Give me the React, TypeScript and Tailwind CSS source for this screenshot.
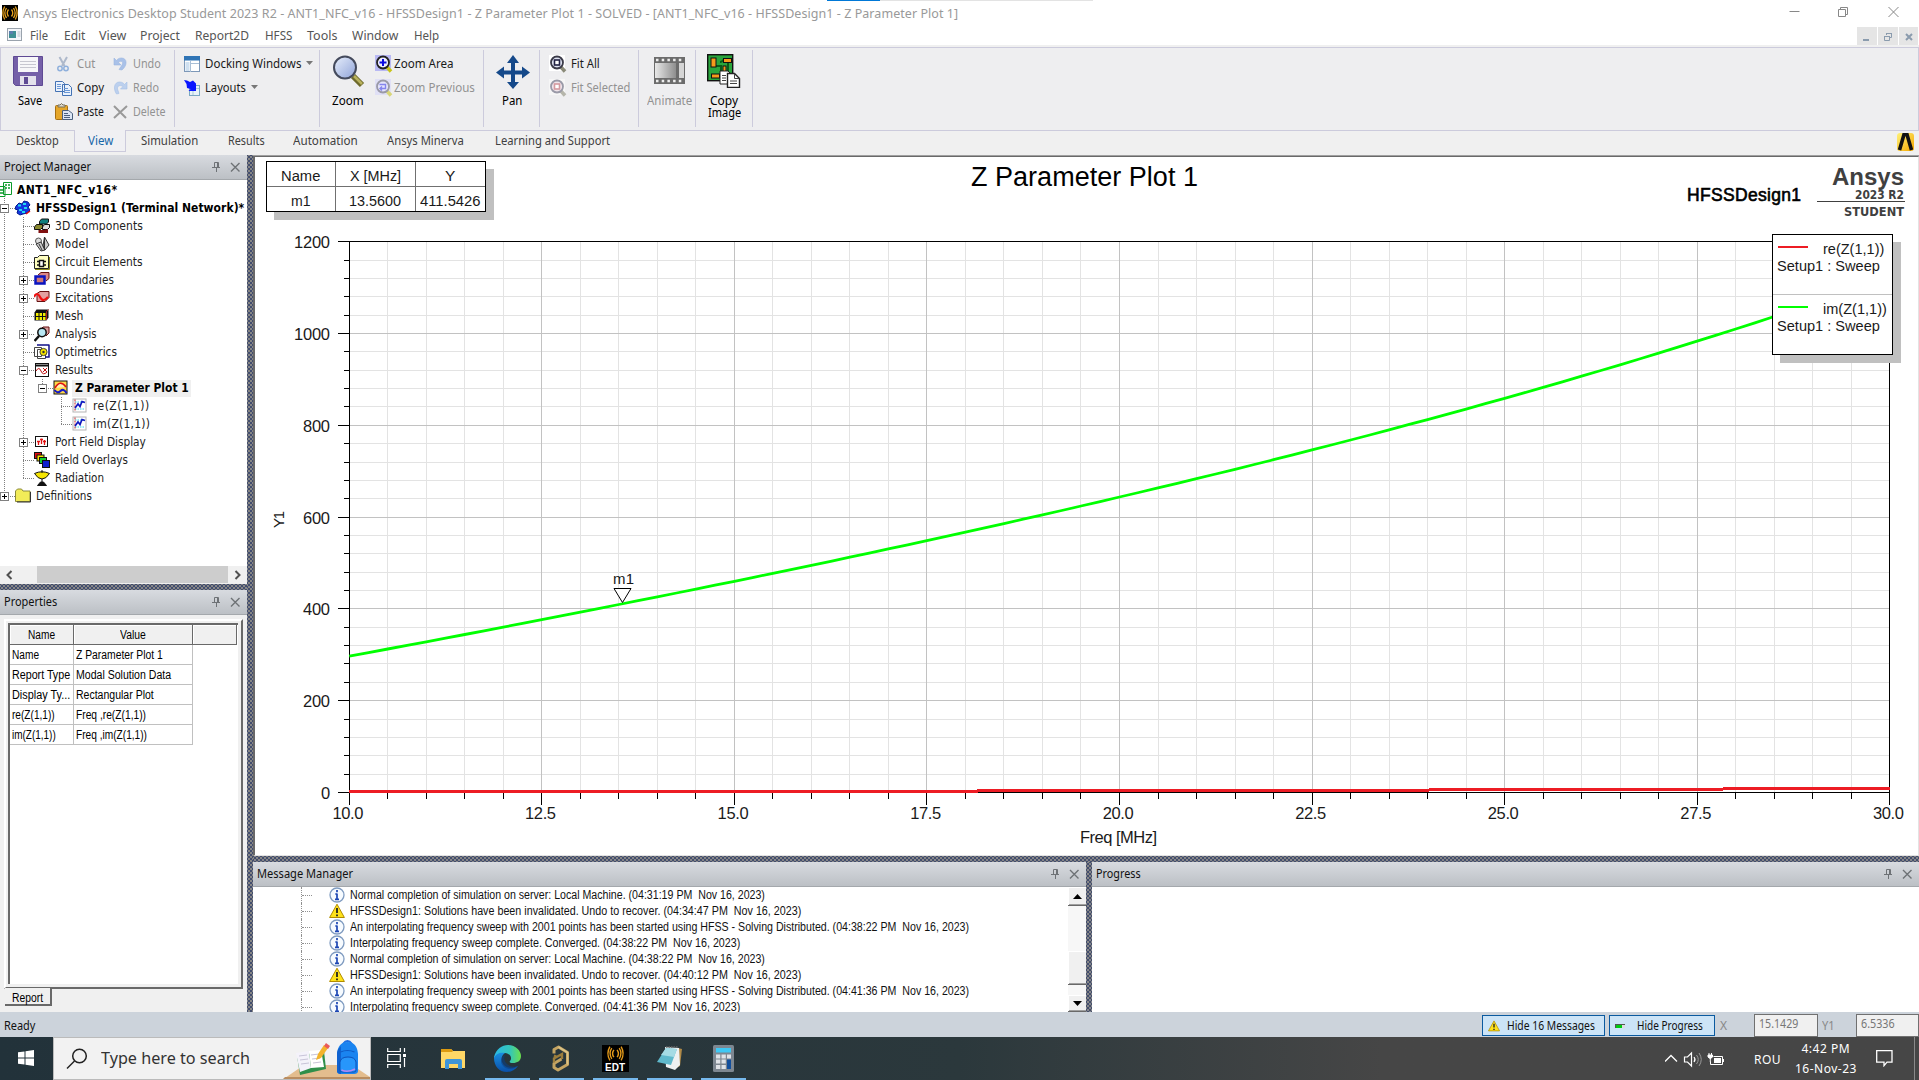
import { useLayoutEffect, useRef, useState, type CSSProperties, type ReactNode } from "react";

const UI = "font-['Noto_Sans','Open_Sans',sans-serif]";
const TREE = "font-['DejaVu_Sans_Condensed','DejaVu_Sans',sans-serif]";
const ARIAL = "font-['Liberation_Sans',Arial,sans-serif]";

/* One line of text fitted to w pixels: wide text is condensed, narrow text is tracked out. */
function Fit({ w, children, className = "" }: { w: number; children: string; className?: string }) {
  const ref = useRef<HTMLSpanElement>(null);
  const [fit, setFit] = useState<CSSProperties>({});
  useLayoutEffect(() => {
    const natural = ref.current!.offsetWidth;
    setFit(natural > w ? { transform: `scaleX(${w / natural})` } : { letterSpacing: (w - natural) / Math.max(1, children.length - 1) });
  }, [w, children]);
  return (
    <span className={"block shrink-0 whitespace-pre " + className} style={{ width: w }}>
      <span ref={ref} className="inline-block origin-left" style={fit}>{children}</span>
    </span>
  );
}

function Svg({ w, h, vb, children, className = "", crisp = false }: { w: number; h: number; vb?: string; children: ReactNode; className?: string; crisp?: boolean }) {
  return (
    <svg width={w} height={h} viewBox={vb ?? `0 0 ${w} ${h}`} fill="none" className={"block shrink-0 " + className} shapeRendering={crisp ? "crispEdges" : "auto"}>
      {children}
    </svg>
  );
}

/* ---------- title and menu ---------- */

const Waves = ({ color }: { color: string }) => (
  <g stroke={color} strokeWidth="1.3">
    <path d="M6.5 4.5Q4 8 6.5 11.5M4.5 3Q1.2 8 4.5 13M2.7 1.5Q-1 8 2.7 14.5M9.5 4.5Q12 8 9.5 11.5M11.5 3Q14.8 8 11.5 13M13.3 1.5Q17 8 13.3 14.5" />
  </g>
);

function TitleBar() {
  return (
    <div className="relative flex h-6 shrink-0 items-center bg-white pl-[2px] pt-[3px] text-[12.5px] leading-none text-[#999]">
      <div className="absolute left-[827px] top-0 flex h-px w-[266px] bg-[#e3e3e3]"><div className="h-px w-[53px] bg-[#0078d7]" /></div>
      <Svg w={16} h={16} className="mb-[2px]"><rect width="16" height="16" fill="#000" /><Waves color="#e6a11c" /></Svg>
      <Fit w={935} className="ml-[5px] pt-px">Ansys Electronics Desktop Student 2023 R2 - ANT1_NFC_v16 - HFSSDesign1 - Z Parameter Plot 1 - SOLVED - [ANT1_NFC_v16 - HFSSDesign1 - Z Parameter Plot 1]</Fit>
      <Svg w={112} h={14} className="ml-auto mr-[19px] mb-[4px]">
        <path d="M1.500 6.500H11.500" stroke="#888" />
        <path d="M50.500 4.500h7v7h-7zM52.500 4.500v-2h7v7h-2" stroke="#888" />
        <path d="M100.500 2l10 10M110.500 2l-10 10" stroke="#888" />
      </Svg>
    </div>
  );
}

const menus: [string, number, number][] = [
  ["File", 18, 8], ["Edit", 21, 16], ["View", 27, 14], ["Project", 40, 14], ["Report2D", 54, 15],
  ["HFSS", 27, 16], ["Tools", 30, 15], ["Window", 46, 15], ["Help", 25, 16],
];

function MenuBar() {
  return (
    <div className="flex h-[21px] shrink-0 items-center bg-white pl-[7px] text-[12.500px] leading-none text-[#555]">
      <Svg w={15} h={13} className="mb-px">
        <rect x=".5" y=".5" width="14" height="12" fill="#f4f6fa" stroke="#9aa3ad" />
        <rect x="2" y="3" width="7" height="7" fill="#3f8f94" /><rect x="2" y="3" width="4" height="3" fill="#5b7fae" /><path d="M10.500 4h3M10.500 6h3M10.500 8h3" stroke="#b5bdc8" />
      </Svg>
      {menus.map(([t, w, g]) => <div key={t} className="flex pt-[4px]"><div className="shrink-0" style={{ width: g }} /><Fit w={w}>{t}</Fit></div>)}
      <div className="ml-auto flex gap-px pt-[3px] pr-px">
        <Svg w={20} h={19}><rect width="20" height="19" fill="#e5e5e5" /><path d="M6 13h6" stroke="#8a9bad" strokeWidth="2" /></Svg>
        <Svg w={20} h={19}><rect width="20" height="19" fill="#e5e5e5" /><path d="M6.500 9.500h5v4h-5zM8.500 8V6.500h5v4H12M8 6.500h6M6 9.500h6" stroke="#8a9bad" /></Svg>
        <Svg w={19} h={19}><rect width="19" height="19" fill="#e5e5e5" /><path d="M7 7l6 6M13 7l-6 6" stroke="#8a9bad" strokeWidth="2" /></Svg>
      </div>
    </div>
  );
}

/* ---------- ribbon ---------- */

const Caret = ({ className = "" }: { className?: string }) => <Svg w={7} h={4} className={className}><path d="M0 0h7L3.500 4z" fill="#777" /></Svg>;

function Group({ w, children }: { w: number; children: ReactNode }) {
  return <div className="flex h-[77px] shrink-0 border-r border-[#cccbdc]" style={{ width: w }}>{children}</div>;
}

function Item({ icon, label, w, off, caret }: { icon: ReactNode; label: string; w: number; off?: boolean; caret?: boolean }) {
  return (
    <div className={"flex h-6 items-center " + (off ? "text-[#929292]" : "text-[#1a1a1a]")}>
      {icon}
      <Fit w={w}>{label}</Fit>
      {caret && <Caret className="ml-[5px] mb-[3px]" />}
    </div>
  );
}

const CutI = <Svg w={22} h={18}><path d="M4.500 2l5 9M12 2L7 11" stroke="#aeb9cb" strokeWidth="2" /><circle cx="5" cy="13.500" r="2.200" stroke="#8fb0dc" strokeWidth="1.500" /><circle cx="11" cy="13.500" r="2.200" stroke="#8fb0dc" strokeWidth="1.500" /></Svg>;
const CopyI = <Svg w={22} h={18}><path d="M.5 2.500h7l2 2v8h-9zM7.500 5.500h6l3 3v8h-9z" fill="#e9f1fc" stroke="#4372b4" /><path d="M2 5.500h4M2 7.500h4M2 9.500h4M9 9.500h4M9 11.500h6M9 13.500h6" stroke="#6b98d6" /></Svg>;
const PasteI = <Svg w={22} h={18}><rect x=".5" y="2.500" width="12" height="14" rx="1" fill="#e5a62a" stroke="#a66f13" /><path d="M3 4h7V2H8L6.500.5 5 2H3z" fill="#ded9cc" stroke="#77705c" /><path d="M7.500 7.500h6l4 3v6h-10z" fill="#dce6f4" stroke="#4b617d" /><path d="M9 10.500h4M9 12.500h6M9 14.500h6" stroke="#4b617d" /></Svg>;
const UndoI = <Svg w={20} h={16}><path d="M1 2v7h7L5.500 6.500C8 4 11 6 9 9l-3 4.500 3 .5C15 9 14 2 8.500 2 6 2 4.500 3 3.500 4.500z" fill="#a9c1e8" stroke="#9ab5e0" strokeWidth=".6" /></Svg>;
const RedoI = <Svg w={20} h={16}><path d="M14 2v7H7.500L10 6.500C7 4.500 4 6 4.500 9l1.500 4.500-2.500.5C0 9 1 2 6.500 2 9 2 10.500 3 11.500 4.500z" fill="#bcd0ee" stroke="#a5c0e6" strokeWidth=".6" /></Svg>;
const DelI = <Svg w={20} h={16}><path d="M1 2l12 12M14 2L1 14" stroke="#999" strokeWidth="2" /></Svg>;
const DockI = <Svg w={21} h={17}><rect x=".5" y="1" width="15" height="14.500" fill="#fff" stroke="#7d98b8" /><rect width="16" height="4.500" fill="#2f74b5" /><rect x="1.500" y="6" width="4" height="9" fill="#cfe0f0" /><path d="M6.500 5v11M7 7.500h8" stroke="#a9bfd6" /></Svg>;
const LayI = <Svg w={21} h={18}><rect x="5.500" y="6.500" width="10" height="10" fill="#e7f2f8" stroke="#7aa7c2" /><path d="M9 11v5M6 9.500h9" stroke="#a9c8da" /><path d="M0 1l3 .5L6 3l3-1.500 3 3V12H4.500l2-2L3 9 2.500 5z" fill="#0a16ff" /></Svg>;

function MagSmall({ ring, fill, handle, plus, back, inner, box }: { ring: string; fill: string; handle: string; plus?: boolean; back?: boolean; inner?: string; box?: string }) {
  return (
    <Svg w={19} h={18}>
      {box && <rect width="16" height="16" fill={box} />}
      <path d="M11 11l5 5.500" stroke={handle} strokeWidth="3.500" />
      <circle cx="8" cy="7.500" r="6" fill={fill} stroke={ring} strokeWidth="1.800" />
      {plus && <path d="M8 4v7M4.500 7.500h7" stroke="#0a0ae0" strokeWidth="2" />}
      {back && <path d="M4.500 5.500h6v4h-5M7 7.500l-2 2 2 2" stroke="#8585ee" strokeWidth="1.400" />}
      {inner && <rect x="5.500" y="5" width="5" height="5" stroke={inner} strokeWidth="1.600" fill="#fff" />}
    </Svg>
  );
}

function Ribbon() {
  return (
    <div className="h-[84px] shrink-0 border border-[#cccbdc] bg-[#eeeef0] pt-[2px] text-[12px] leading-none">
      <div className="flex">
        <Group w={174}>
          <div className="w-[54px] shrink-0 pl-[12px] pt-[6px]">
            <Svg w={30} h={30}>
              <path d="M.5.500h29v29h-27l-2-2z" fill="#7560a8" stroke="#5f4a94" /><rect x="5" y="1" width="20" height="15" fill="#f7f7f9" />
              <path d="M7 5.500h16M7 8.500h16M7 11.500h16" stroke="#c7c7d0" /><rect x="7" y="20" width="16" height="9" fill="#e4e2ec" /><rect x="11" y="21" width="4" height="7" fill="#5f4a94" />
            </Svg>
            <Fit w={24} className="ml-[5px] mt-[9px]">Save</Fit>
          </div>
          <div className="w-[57px] shrink-0 pt-[2px]">
            <Item icon={CutI} label="Cut" w={18} off /><Item icon={CopyI} label="Copy" w={27} /><Item icon={PasteI} label="Paste" w={27} />
          </div>
          <div className="shrink-0 pl-px pt-[2px]">
            <Item icon={UndoI} label="Undo" w={28} off /><Item icon={RedoI} label="Redo" w={26} off /><Item icon={DelI} label="Delete" w={33} off />
          </div>
        </Group>
        <Group w={145}>
          <div className="pl-[9px] pt-[2px]">
            <Item icon={DockI} label="Docking Windows" w={96} caret /><Item icon={LayI} label="Layouts" w={41} caret />
          </div>
        </Group>
        <Group w={164}>
          <div className="w-[55px] shrink-0 pl-[12px] pt-[5px]">
            <Svg w={34} h={34}>
              <defs><linearGradient id="glass" x1="0" y1="0" x2="1" y2="1"><stop stopColor="#e8effc" /><stop offset="1" stopColor="#8fa3d8" /></linearGradient></defs>
              <path d="M21 21l9 9" stroke="#6e6a2c" strokeWidth="6" /><path d="M22 21l8 8" stroke="#b9b25e" strokeWidth="2.500" />
              <circle cx="13" cy="12.500" r="11" fill="url(#glass)" stroke="#444a5c" strokeWidth="2" />
            </Svg>
            <Fit w={32} className="mt-[6px]">Zoom</Fit>
          </div>
          <div className="pt-[2px]">
            <Item icon={<MagSmall ring="#222" fill="#eef" handle="#c9c419" plus box="#b9b9f4" />} label="Zoom Area" w={60} />
            <Item icon={<MagSmall ring="#9a9aa8" fill="#e4e4fb" handle="#d8d678" back box="#e0e0f6" />} label="Zoom Previous" w={81} off />
          </div>
        </Group>
        <Group w={56}>
          <div className="pl-[12px] pt-[5px]">
            <Svg w={34} h={34}><path d="M17 0l6 8h-4v7.500h7v-4l8 6-8 6v-4h-7V27h4l-6 7-6-7h4v-7.500H8v4l-8-6 8-6v4h7V8h-4z" fill="#15498a" /></Svg>
            <Fit w={20} className="ml-[6px] mt-[6px]">Pan</Fit>
          </div>
        </Group>
        <Group w={99}>
          <div className="pl-[9px] pt-[2px]">
            <Item icon={<MagSmall ring="#3a3a48" fill="#dfe3f2" handle="#8a8a78" inner="#222244" box="#fff" />} label=" Fit All" w={32} />
            <Item icon={<MagSmall ring="#9a9aa8" fill="#f0e4ea" handle="#b5b5aa" inner="#d49aa0" box="#f6f6f6" />} label=" Fit Selected" w={62} off />
          </div>
        </Group>
        <Group w={57}>
          <div className="pl-[8px] pt-[7px] text-[#929292]">
            <Svg w={31} h={28} className="ml-[7px]">
              <defs><linearGradient id="film"><stop stopColor="#e8e8e8" /><stop offset="1" stopColor="#8e8e8e" /></linearGradient></defs>
              <rect width="31" height="27" fill="#6c6c6c" /><rect x="1" y="6" width="21" height="15" fill="url(#film)" /><rect x="25" y="6" width="5" height="15" fill="#d5d5d5" />
              <path d="M2 3h28M2 24h28" stroke="#eee" strokeWidth="2.500" strokeDasharray="2.500 3.200" />
            </Svg>
            <Fit w={45} className="mt-[10px]">Animate</Fit>
          </div>
        </Group>
        <Group w={57}>
          <div className="pl-[11px] pt-[4px]">
            <Svg w={34} h={34}>
              <rect x=".7" y=".7" width="25" height="26" fill="#29a53c" stroke="#111" strokeWidth="1.400" />
              <path d="M13 8c3 0 3-3 5-3M9 12h5v6M21 9v8" stroke="#0a5a18" strokeWidth="2" />
              <g fill="#f59a1c" stroke="#111"><rect x="4" y="4" width="5" height="9" /><rect x="16.500" y="4.500" width="8" height="4" /><rect x="4.500" y="20" width="8" height="4" /><rect x="16" y="12" width="3" height="6" /></g>
              <path d="M13 17h8l3 3v10H13z" fill="#fff" stroke="#222" /><path d="M20.500 19.500h7l5 5v9h-12z" fill="#fff" stroke="#222" strokeWidth="1.400" />
              <path d="M27.500 19.500v5h5M15 21.500h4M15 24h4M15 26.500h4M23 27h7M23 29.500h7" stroke="#444" />
            </Svg>
            <Fit w={28} className="ml-[3px] mt-[7px] h-3">Copy</Fit>
            <Fit w={33} className="ml-[1px]">Image</Fit>
          </div>
        </Group>
      </div>
    </div>
  );
}

const tabs: [string, number, number][] = [
  ["Simulation", 57, 15], ["Results", 37, 30], ["Automation", 65, 28], ["Ansys Minerva", 77, 29], ["Learning and Support", 115, 31],
];

function TabBar() {
  return (
    <div className="flex h-6 shrink-0 bg-[#f0f0f0] text-[12px] leading-[20px] text-[#404040]">
      <Fit w={43} className="ml-[16px]">Desktop</Fit>
      <div className="-mt-px ml-[15px] h-[22px] w-[52px] border-x border-b border-[#cccbdc] bg-[#f0f0f3] pl-[13px] pt-px text-[#1767a8]"><Fit w={25}>View</Fit></div>
      {tabs.map(([t, w, g]) => <div key={t} className="flex"><div className="shrink-0" style={{ width: g }} /><Fit w={w}>{t}</Fit></div>)}
      <Svg w={17} h={18} className="ml-auto mr-[5px] mt-[2px]">
        <defs><linearGradient id="gold" x1="0" y1="0" x2="1" y2="1"><stop stopColor="#fff27a" /><stop offset="1" stopColor="#f5a800" /></linearGradient></defs>
        <rect width="17" height="18" rx="3" fill="url(#gold)" /><path d="M2.500 17L7 1.500h3L14.500 17" stroke="#111" strokeWidth="3.600" />
      </Svg>
    </div>
  );
}

/* ---------- docked panels ---------- */

const hatch = "bg-[#868686] bg-[image:radial-gradient(#3c486c_24%,transparent_34%),radial-gradient(#3c486c_24%,transparent_34%)] bg-[length:4px_4px] bg-[position:0_0,2px_2px]";

function PanelHeader({ title, w, tools = true }: { title: string; w: number; tools?: boolean }) {
  return (
    <div className="flex h-[25px] shrink-0 items-center border-b border-[#a4a8ac] bg-linear-to-b from-[#d8dbe0] to-[#bcc0c5] pl-1 text-[12px] leading-none text-[#111]">
      <Fit w={w}>{title}</Fit>
      {tools && (
        <Svg w={28} h={12} className="ml-auto mr-[7px]">
          <path d="M2.500 1.500h4v5h-4zM5.500 1v5M0 6.500h8M4.500 7v4" stroke="#6e7276" />
          <path d="M19 2l8.500 8.500M27.500 2L19 10.500" stroke="#6e7276" strokeWidth="1.400" />
        </Svg>
      )}
    </div>
  );
}

const icons: Record<string, ReactNode> = {
  project: <><path d="M-1 4.500h6v10h-6M3.500.500h8v12h-8z" stroke="#0a9a2a" fill="#fff" /><path d="M5 3h2M8 3h2M5 6h2M8 6h2M0 8h3M0 11h3" stroke="#0a9a2a" strokeWidth="1.500" /></>,
  design: <><path d="M1 6l3-3 3 1 2-3 4 1 2 3-2 2 2 3-3 3-4 1-3 1-3-2 1-3-3-1z" fill="#1438e0" stroke="#001a90" /><path d="M3 5.500h3M8 4h3M4 10h3M9 8h3M7 12h3" stroke="#20d8f0" strokeWidth="2" /><path d="M11 14l4-3" stroke="#e01010" strokeWidth="1.500" /></>,
  comps: <><path d="M5.500 3.500l2-2.500h7v3l-2 2h-7z" fill="#0e7e7e" stroke="#111" /><path d="M.5 9l2-2.500h6v3l-2 2h-6z" fill="#8a8a30" stroke="#111" /><path d="M8.500 9l2-2.500h5v3l-2 2h-5z" fill="#ddd" stroke="#111" /><path d="M4.500 13.500h8v-2" stroke="#801010" strokeWidth="3" /></>,
  model: <><circle cx="4.500" cy="5" r="3" stroke="#555" fill="#ddd" /><path d="M10.500 1l4.500 8-4 5-2-4zM2 8l5-2 4 8-4 1z" fill="#ccc" stroke="#333" /><path d="M10.500 2v11M5 8l3 6" stroke="#333" /></>,
  circuit: <><path d="M.5 3.500h3l2-2h9v13H.5z" fill="#ffffc0" stroke="#222" /><path d="M15.500 3v12.500H1" stroke="#878718" /><path d="M5.500 6.500h4v6h-4z" fill="#fff" stroke="#111" strokeWidth="1.400" /><path d="M3 7.500h2M3 11h2M10 7.500h2M10 11h2" stroke="#111" strokeWidth="1.400" /></>,
  bound: <><path d="M4 3l3-2.500h8v6L12 9" fill="#d88" stroke="#611" /><path d="M1.500 4.500h9v7h-9z" fill="#c77" stroke="#0a14c0" strokeWidth="2.500" /></>,
  excit: <><path d="M3 3.500l3-2h9v6l-4 4H3z" fill="#e3a0a0" stroke="#611" /><path d="M0 7q3-6 6 0t8 0" stroke="#f01010" strokeWidth="2.200" /></>,
  mesh: <><path d="M.5 4.500l2-3h12v8l-2 3H.5z" fill="#111" /><path d="M2 6.500h10M2 10.500h10" stroke="#f5ee00" strokeWidth="3" strokeDasharray="2.500 1" /><path d="M12.500 12V3.500l2-2" stroke="#a22" /></>,
  analysis: <><path d="M6 4l3-3h6v6l-3 3" fill="#d8a0a0" stroke="#611" /><circle cx="8" cy="6.500" r="4.200" fill="#b8e8f4" stroke="#111" strokeWidth="1.500" /><path d="M5 10l-4.500 5" stroke="#111" strokeWidth="2.500" /></>,
  opti: <><path d="M.5 3.500h7v9h-7zM3.500 5.500h8v9h-8z" fill="#fff" stroke="#444" /><path d="M3 1h12.500M15 1v12h-4" stroke="#10108a" strokeWidth="1.500" /><circle cx="9.500" cy="8" r="3.600" fill="#f5e400" stroke="#443" /><circle cx="9.500" cy="8" r="1.200" fill="#333" /></>,
  results: <><rect x="1.500" y="1.500" width="13" height="13" fill="#fff" stroke="#111" /><path d="M2 3.500h12" stroke="#111" strokeWidth="2" /><path d="M2 9q3-5 5 0t6 1M9 6l4 4M13 6l-4 4" stroke="#c01010" /></>,
  plot: <><rect x="1" y="1" width="13" height="13" fill="#ffd84a" stroke="#111" /><path d="M2 8q5-9 11-1" stroke="#e01010" strokeWidth="1.700" fill="#fff3b0" /><path d="M1.500 10q3 4 6 1t6 2" stroke="#1418c8" strokeWidth="2" /></>,
  trace: <><rect x="1" y="1" width="13" height="13" fill="#fff" stroke="#b4b4b4" /><path d="M3 4h10M3 11h10" stroke="#35d6ea" strokeDasharray="1.500 1" /><path d="M3 1.500v11" stroke="#c22" strokeDasharray="2 1" /><path d="M3 10l3-4 2 2.500 2-5 3 1" stroke="#1018c0" strokeWidth="1.700" /></>,
  port: <><rect x="1.500" y="2.500" width="12" height="10" fill="#fff" stroke="#111" /><path d="M4.500 11V7M7.500 10V4.500M10.500 11V6M3 7.500h3M6 5.500h3M9 7.500h3" stroke="#e01010" strokeWidth="1.300" /></>,
  fields: <><rect x=".5" y=".5" width="7" height="6" fill="#e01010" stroke="#111" /><rect x="3" y="3" width="7" height="6" fill="#f5e400" stroke="#111" /><rect x="5.500" y="5.500" width="7" height="6" fill="#12d030" stroke="#111" /><rect x="8.500" y="8.500" width="7" height="7" fill="#1020d0" stroke="#111" /></>,
  radiation: <><path d="M.5 3.500Q8 0 15.500 3.500Q12 9 8 9T.5 3.500z" fill="#f5e400" stroke="#111" /><path d="M8 9v3M3.500 15.500h9l-3-3.500h-3z" fill="#111" stroke="#111" /><path d="M8 0v3" stroke="#111" /></>,
  folder: <><path d="M.5 3l2-2h4l1.500 2h7v10.500H.5z" fill="#f2ec58" stroke="#8b8a3a" /><path d="M15.500 4v10H2" stroke="#333" /></>,
};

type Row = [icon: string, x: number, text: string, w: number, style?: string];
const rows: Row[] = [
  ["project", 0, "ANT1_NFC_v16*", 100, "b"], ["design", 15, "HFSSDesign1 (Terminal Network)*", 208, "b"],
  ["comps", 34, "3D Components", 88], ["model", 34, "Model", 33], ["circuit", 34, "Circuit Elements", 87], ["bound", 34, "Boundaries", 59],
  ["excit", 34, "Excitations", 58], ["mesh", 34, "Mesh", 28], ["analysis", 34, "Analysis", 41], ["opti", 34, "Optimetrics", 62],
  ["results", 34, "Results", 38], ["plot", 53, "Z Parameter Plot 1", 114, "s"], ["trace", 72, "re(Z(1,1))", 56], ["trace", 72, "im(Z(1,1))", 57],
  ["port", 34, "Port Field Display", 91], ["fields", 34, "Field Overlays", 73], ["radiation", 34, "Radiation", 49], ["folder", 15, "Definitions", 56],
];
const branches: [number, number, number][] = [
  [1, 4, 15], [17, 4, 15], [2, 23, 34], [3, 23, 34], [4, 23, 34], [5, 23, 34], [6, 23, 34], [7, 23, 34], [8, 23, 34], [9, 23, 34], [10, 23, 34],
  [14, 23, 34], [15, 23, 34], [16, 23, 34], [11, 42, 53], [12, 61, 72], [13, 61, 72],
];
const boxes: [number, number, boolean][] = [[1, 4, false], [5, 23, true], [6, 23, true], [8, 23, true], [10, 23, false], [11, 42, false], [14, 23, true], [17, 4, true]];

function ProjectTree() {
  return (
    <div className="relative h-[386px] shrink-0 overflow-hidden bg-white pt-px">
      <Svg w={90} h={330} className="absolute left-0 top-0" crisp>
        <g stroke="#808080" strokeDasharray="1 1">
          <path d="M4.500 18V316M23.500 37V298M42.500 199V208M61.500 217V244" />
          {branches.map(([i, a, b]) => <path key={i} d={`M${a} ${10.5 + 18 * i}H${b}`} />)}
        </g>
        {boxes.map(([i, x, plus]) => (
          <g key={i} transform={`translate(${x - 4} ${6 + 18 * i})`}>
            <rect x=".5" y=".5" width="8" height="8" fill="#fff" stroke="#808080" /><path d={plus ? "M2 4.500h5M4.500 2v5" : "M2 4.500h5"} stroke="#000" />
          </g>
        ))}
      </Svg>
      {rows.map(([icon, x, text, w, s], i) => (
        <div key={i} className={"flex h-[18px] items-center text-[12px] leading-none text-[#222] " + TREE}>
          <div className="relative shrink-0" style={{ marginLeft: x }}><Svg w={icon === "project" ? 13 : 16} h={16}>{icons[icon]}</Svg></div>
          <div className={"flex h-[17px] items-center " + (s === "s" ? "ml-[3px] bg-[#f0f0f0] px-[2px] font-bold text-black" : s === "b" ? "ml-[4px] font-bold text-black" : "ml-[4px]")}>
            <Fit w={w} className={i ? "ml-px" : ""}>{text}</Fit>
          </div>
        </div>
      ))}
    </div>
  );
}

function HScroll() {
  return (
    <div className="flex h-[18px] shrink-0 items-center bg-[#f0f0f0] pb-px">
      <Svg w={37} h={17}><path d="M11.500 5l-4 4 4 4" stroke="#505050" strokeWidth="2" /></Svg>
      <div className="h-[17px] w-[191px] bg-[#cdcdcd]" />
      <Svg w={19} h={17}><path d="M7.500 5l4 4-4 4" stroke="#505050" strokeWidth="2" /></Svg>
    </div>
  );
}

const props: [string, number, string, number][] = [
  ["Name", 27, "Z Parameter Plot 1", 87], ["Report Type", 58, "Modal Solution Data", 95], ["Display Ty...", 58, "Rectangular Plot", 78],
  ["re(Z(1,1))", 43, "Freq ,re(Z(1,1))", 70], ["im(Z(1,1))", 44, "Freq ,im(Z(1,1))", 71],
];

function Properties() {
  const head = "flex items-center justify-center border-b border-r border-[#696969] bg-[#f0f0f0] pr-px shadow-[inset_1px_1px_#fff]";
  return (
    <div className={"flex min-h-0 flex-1 flex-col bg-[#f0f0f0] pl-[4px] pt-[4px] text-[12px] leading-none text-black " + ARIAL}>
      <div className="h-[370px] w-[239px] border-2 border-b-[#696969] border-l-white border-r-[#696969] border-t-white pl-[2px] pt-[2px]">
        <div className="h-[361px] w-[230px] border-l-2 border-t-2 border-[#696969] bg-white">
          <div className="flex h-5">
            <div className={"w-[64px] " + head}><Fit w={27}>Name</Fit></div>
            <div className={"w-[119px] " + head}><Fit w={26}>Value</Fit></div>
            <div className={"w-[44px] " + head} />
          </div>
          {props.map(([a, aw, b, bw]) => (
            <div key={a} className="flex h-5 w-[183px]">
              <div className="flex w-[64px] items-center border-b border-r border-[#c0c0c0] pl-[2px]"><Fit w={aw}>{a}</Fit></div>
              <div className="flex w-[119px] items-center border-b border-r border-[#c0c0c0] pl-[2px]"><Fit w={bw}>{b}</Fit></div>
            </div>
          ))}
        </div>
      </div>
      <div className="-mt-px ml-px h-[18px] w-[47px] border-b-2 border-r-2 border-[#696969] bg-[#f0f0f0] pl-[7px] pt-[4px]"><Fit w={31}>Report</Fit></div>
    </div>
  );
}

/* ---------- plot ---------- */

const X0 = 94.3, Y0 = 635.5, PX = 77.02, PY = 0.459;
const px = (f: number) => X0 + (f - 10) * PX;
const py = (v: number) => Y0 - v * PY;
const reactance = (f: number) => (28.94 * f) / (1 - 2.52e-4 * f * f);
const curve = Array.from({ length: 81 }, (_, i) => 10 + i * 0.25).map((f) => `${px(f).toFixed(1)},${py(reactance(f)).toFixed(1)}`).join(" ");
const xTicks = Array.from({ length: 41 }, (_, i) => i);
const yTicks = Array.from({ length: 31 }, (_, i) => i);
const snap = (n: number) => Math.floor(n) + 0.5;

function Chart() {
  return (
    <svg width="1662" height="697" viewBox="0 0 1662 697" className="block" fontFamily="'Liberation Sans', Arial, sans-serif">
      <g shapeRendering="crispEdges">
        {xTicks.filter((i) => i % 5).map((i) => <path key={i} d={`M${snap(px(10 + i / 2))} 85V635`} stroke="#e3e3e3" />)}
        {yTicks.filter((i) => i % 5).map((i) => <path key={i} d={`M94 ${snap(py(i * 40))}H1634`} stroke="#e3e3e3" />)}
        {xTicks.filter((i) => !(i % 5)).map((i) => <path key={i} d={`M${snap(px(10 + i / 2))} 85V635`} stroke="#c2c2c2" />)}
        {yTicks.filter((i) => !(i % 5)).map((i) => <path key={i} d={`M94 ${snap(py(i * 40))}H1634`} stroke="#c2c2c2" />)}
        {xTicks.map((i) => <path key={i} d={`M${snap(px(10 + i / 2))} 635v${i % 5 ? 7 : 13}`} stroke="#000" />)}
        {yTicks.map((i) => <path key={i} d={`M${i % 5 ? 89 : 83} ${snap(py(i * 40))}H94`} stroke="#000" />)}
        <path d="M94.500 84.500H1634.500V635.500H94.500z" stroke="#000" fill="none" />
        <path d="M94 633h629v3h-629zM722 632h452v3h-452zM1174 631h294v3h-294zM1468 630h167v3h-167z" fill="#ed1c24" />
      </g>
      <polyline points={curve} fill="none" stroke="#00ff00" strokeWidth="2.800" />
      <path d="M359 431.500h17l-8.500 14z" fill="#fff" stroke="#000" />
      <g fill="#1a1a1a">
        <text x="358" y="427" fontSize="15" textLength="21">m1</text>
        <g fontSize="16.500">
          {[0, 200, 400, 600, 800, 1000, 1200].map((v) => <text key={v} x={v === 0 ? 66 : v < 1000 ? 48 : 39} y={py(v) + 6.5} textLength={v === 0 ? 9 : v < 1000 ? 27 : 36}>{v}</text>)}
          {["10.0", "12.5", "15.0", "17.5", "20.0", "22.5", "25.0", "27.5", "30.0"].map((t, i) => <text key={t} x={77.5 + i * 192.55} y={661.5} textLength={31}>{t}</text>)}
          <text x="825" y="686" textLength="77">Freq [MHz]</text>
          <text transform="translate(29 371) rotate(-90)" fontSize="15" textLength="17">Y1</text>
        </g>
      </g>
      <text x="716" y="29" fontSize="27" textLength="227" fill="#000">Z Parameter Plot 1</text>
      <text x="1432" y="44" fontSize="17.500" textLength="114" fill="#000" stroke="#000" strokeWidth=".6">HFSSDesign1</text>
      <g fill="#404040" fontWeight="bold">
        <text x="1577" y="28" fontSize="23.500" textLength="72" lengthAdjust="spacingAndGlyphs">Ansys</text>
        <g fontFamily="'DejaVu Sans Condensed','DejaVu Sans',sans-serif">
          <text x="1600" y="42" fontSize="13" textLength="49" lengthAdjust="spacingAndGlyphs">2023 R2</text>
          <text x="1589" y="59" fontSize="13" textLength="60" lengthAdjust="spacingAndGlyphs">STUDENT</text>
        </g>
        <path d="M1562 44.500h88" stroke="#404040" />
      </g>
    </svg>
  );
}

function PlotArea() {
  const cell = "flex items-center justify-center border-[#707070] pr-px pt-[3px]";
  return (
    <div className="flex h-[701px] shrink-0 flex-col border-t border-[#a0a0a0]">
      <div className="relative min-h-0 flex-1 overflow-hidden border-b border-r border-l-2 border-t border-b-[#e3e3e3] border-l-[#696969] border-r-[#e3e3e3] border-t-[#696969] bg-white">
        <Chart />
        <div className={"absolute left-[11px] top-[4px] grid h-[51px] w-[220px] grid-cols-[69px_80px_1fr] grid-rows-2 border border-black bg-white text-[15.500px] leading-none text-[#1a1a1a] shadow-[8px_8px_#c0c0c0] " + ARIAL}>
          <div className={cell + " border-b border-r"}><Fit w={39}>Name</Fit></div>
          <div className={cell + " border-b border-r"}><Fit w={51}>X [MHz]</Fit></div>
          <div className={cell + " border-b"}><Fit w={10}>Y</Fit></div>
          <div className={cell + " border-r"}><Fit w={20}>m1</Fit></div>
          <div className={cell + " border-r"}><Fit w={52}>13.5600</Fit></div>
          <div className={cell}><Fit w={61}>411.5426</Fit></div>
        </div>
        <div className={"absolute left-[1517px] top-[77px] flex h-[121px] w-[121px] flex-col border border-black bg-white text-[15px] leading-[17px] text-[#1a1a1a] shadow-[8px_8px_#c0c0c0] " + ARIAL}>
          {([["re(Z(1,1))", 61, "bg-[#ed1c24]"], ["im(Z(1,1))", 64, "bg-[#00ff00]"]] as [string, number, string][]).map(([t, w, c], i) => (
            <div key={t} className={"h-[60px] pl-[4px] pt-[5px] " + (i === 0 ? "border-b border-[#c0c0c0]" : "")}>
              <div className="flex"><div className={"ml-px mr-[15px] mt-[6px] h-[2px] w-[30px] " + c} /><Fit w={w}>{t}</Fit></div>
              <Fit w={103}>Setup1 : Sweep</Fit>
            </div>
          ))}
        </div>
      </div>
    </div>
  );
}

/* ---------- messages ---------- */

const InfoI = () => <Svg w={16} h={16}><circle cx="8" cy="8" r="7" fill="#f7fbff" stroke="#7f9bc0" strokeWidth="1.300" /><path d="M8 3v2.300M8 6.500v5.500M6.300 7h1.700M6 12.300h4" stroke="#1c46b4" strokeWidth="1.700" /></Svg>;
const WarnI = ({ s = 16 }: { s?: number }) => <Svg w={s} h={s} vb="0 0 16 16"><path d="M8 1.200L15.400 14.500H.6z" fill="#ffe21a" stroke="#b18c00" strokeLinejoin="round" /><path d="M8 5v5M8 11.500v1.700" stroke="#222" strokeWidth="1.800" /></Svg>;

const normal = "Normal completion of simulation on server: Local Machine. ";
const inval = "HFSSDesign1: Solutions have been invalidated. Undo to recover. ";
const sweep = "An interpolating frequency sweep with 2001 points has been started using HFSS - Solving Distributed. ";
const conv = "Interpolating frequency sweep complete. Converged. ";
const messages: [string, number, boolean][] = [
  [normal + "(04:31:19 PM  Nov 16, 2023)", 415, false], [inval + "(04:34:47 PM  Nov 16, 2023)", 451, true],
  [sweep + "(04:38:22 PM  Nov 16, 2023)", 619, false], [conv + "(04:38:22 PM  Nov 16, 2023)", 390, false],
  [normal + "(04:38:22 PM  Nov 16, 2023)", 415, false], [inval + "(04:40:12 PM  Nov 16, 2023)", 451, true],
  [sweep + "(04:41:36 PM  Nov 16, 2023)", 619, false], [conv + "(04:41:36 PM  Nov 16, 2023)", 390, false],
];

function Messages() {
  const btn = "flex w-[18px] shrink-0 items-center justify-center border-b border-b-[#696969] bg-[#f0f0f0] shadow-[inset_1px_1px_#fff,inset_0_-1px_#a0a0a0]";
  return (
    <div className="flex h-[125px] overflow-hidden bg-white">
      <div className="min-w-0 flex-1">
        {messages.map(([t, w, warn], i) => (
          <div key={i} className={"flex h-4 items-center text-[12px] leading-none text-[#111] " + ARIAL}>
            <div className="ml-[48px] mr-[17px] flex h-4 w-[11px] items-center border-l border-dotted border-[#909090]"><div className="w-full border-t border-dotted border-[#909090]" /></div>
            {warn ? <WarnI /> : <InfoI />}
            <Fit w={w} className="ml-[5px]">{t}</Fit>
          </div>
        ))}
      </div>
      <div className="flex w-[18px] flex-col bg-[#f7f7f7]">
        <div className={btn + " h-[19px]"}><Svg w={9} h={5}><path d="M0 5l4.500-5L9 5z" fill="#000" /></Svg></div>
        <div className="h-[45px]" />
        <div className={btn + " h-[34px]"} />
        <div className="h-[10px]" />
        <div className={btn + " h-[17px] pt-px"}><Svg w={9} h={5}><path d="M0 0h9L4.500 5z" fill="#000" /></Svg></div>
      </div>
    </div>
  );
}

/* ---------- status and taskbar ---------- */

function StatusBar() {
  const button = "flex h-[21px] items-center border border-[#0a5aa0] bg-[#cce4f7]";
  const field = "h-[23px] border border-[#707070] bg-[#f0f0f0] pl-[4px] pt-[3px] text-[#777]";
  return (
    <div className="flex h-[25px] shrink-0 items-center bg-[#ccd3db] pl-1 text-[12px] leading-none text-[#111]">
      <Fit w={31} className="pt-[2px]">Ready</Fit>
      <div className={button + " ml-auto mt-[2px] w-[123px] pl-[5px]"}><WarnI s={12} /><Fit w={88} className="ml-[7px]">Hide 16 Messages</Fit></div>
      <div className={button + " ml-[4px] mt-[2px] w-[106px] pl-[5px]"}>
        <div className="flex h-[4px] w-[10px] border-l border-t border-[#555] bg-[#ddd]"><div className="w-[6px] bg-[#0c1]" /></div>
        <Fit w={66} className="ml-[12px]">Hide Progress</Fit>
      </div>
      <Fit w={7} className="ml-[5px] pt-[2px] text-[#888]">X</Fit>
      <div className={field + " ml-[27px] mt-px w-[64px]"}><Fit w={39}>15.1429</Fit></div>
      <Fit w={13} className="ml-[4px] pt-[2px] text-[#888]">Y1</Fit>
      <div className={field + " ml-[21px] mt-px w-[63px]"}><Fit w={34}>6.5336</Fit></div>
    </div>
  );
}

const apps: ReactNode[] = [
  <Svg w={27} h={27} key="edge">
    <defs>
      <linearGradient id="e1"><stop stopColor="#2ab8e8" /><stop offset=".6" stopColor="#35c6b8" /><stop offset="1" stopColor="#6be04c" /></linearGradient>
      <linearGradient id="e2" x1="0" y1="0" x2="0" y2="1"><stop stopColor="#1a8fe0" /><stop offset="1" stopColor="#0a4fa8" /></linearGradient>
    </defs>
    <path d="M0 12C2 4 8 0 14 0c8 0 13 6 13 11 0 5-4 7-8 7-3 0-4-1-3-2 3-4-1-8-5-8C6 8 2 10 0 14z" fill="url(#e1)" />
    <path d="M0 13C2 8 7 7 11 8c-3 2-4 5-3 9 2 5 8 8 16 4-3 4-7 6-11 6C5 27 0 21 0 13z" fill="url(#e2)" />
    <path d="M11 10c-2 4 0 9 5 11 3 1 6 1 8 0-5 5-15 4-17-4-.5-3 1-6 4-7z" fill="#0c3f86" opacity=".6" />
  </Svg>,
  <Svg w={18} h={27} key="altium">
    <path d="M2 8.500V4.500L6.500 2l9 5.500v12L6 25l-4-2.500v-4l7.500-4.500" stroke="#c4a462" strokeWidth="3" strokeLinejoin="round" />
    <path d="M2 10.500l3 1.500M2 17.500v-4l8-4.500v5" stroke="#9c7d3c" strokeWidth="2.400" />
    <path d="M6.500 2l9 5.500v12" stroke="#dcc488" strokeWidth="1.500" />
  </Svg>,
  <div key="edt" className="flex h-[27px] w-[27px] flex-col items-center bg-black">
    <Svg w={25} h={17} vb="0 0 16 16"><Waves color="#e39a1a" /></Svg>
    <span className={"text-[10px] font-bold leading-[11px] text-white " + ARIAL}>EDT</span>
  </div>,
  <Svg w={25} h={26} key="note"><path d="M21 3l4 1-2 17-4 2z" fill="#b08a48" /><path d="M8 2l14 1 1 17-5 5-9-3z" fill="#eef1f2" /><path d="M9 3l11 1-6 16L0 17z" fill="#5fb9cc" /><path d="M9 3l11 1-3 8L4 10z" fill="#a5dbe4" /><path d="M9 2h12" stroke="#666" strokeWidth="1.500" strokeDasharray="1.500 1" /></Svg>,
  <Svg w={21} h={27} key="calc"><rect width="21" height="27" rx="1.500" fill="#7d8791" /><rect x="3" y="3" width="15" height="4.500" fill="#3fc8f4" /><path d="M3 11.500h10M3 16.500h10M3 22h10" stroke="#dfe3e8" strokeWidth="4" strokeDasharray="4.300 1.200" /><path d="M16 9.500v4" stroke="#dfe3e8" strokeWidth="4" /><path d="M16 14.500v9.500" stroke="#124f9c" strokeWidth="4" /></Svg>,
];

function Taskbar() {
  return (
    <div className="flex h-[43px] shrink-0 bg-linear-to-r from-[#22323a] from-0% via-[#2b383c] via-50% to-[#464646] to-72% text-white">
      <div className="flex w-[53px] shrink-0 items-center justify-center">
        <Svg w={16} h={16} className="mr-[1px] mb-px"><path d="M0 2.300L6.500 1.400V7.500H0zM7.500 1.200L16 0v7.500H7.500zM0 8.500h6.500v6.100L0 13.700zM7.500 8.500H16V16l-8.500-1.200z" fill="#fff" /></Svg>
      </div>
      <div className="flex w-[318px] shrink-0 items-center border border-[#bbb] bg-[#f2f2f2] pl-[12px]">
        <Svg w={22} h={22}><circle cx="13.500" cy="8" r="6.800" stroke="#222" strokeWidth="1.500" /><path d="M8.500 13L1 20.500" stroke="#222" strokeWidth="1.500" /></Svg>
        <Fit w={149} className="ml-[13px] text-[16.500px] leading-none text-[#333]">Type here to search</Fit>
        <Svg w={87} h={41} className="ml-auto">
          <path d="M2 40L21 27h48l18 12v1z" fill="#e3bd8e" /><path d="M0 41l2-2h85v2z" fill="#b98d60" />
          <path d="M14 18l27-5 2 18-26 6z" fill="#2f8f4a" /><path d="M13 15l13-2 2 17-11 4z" fill="#f4f2fa" /><path d="M26 13l12-1 3 17-13 1z" fill="#fff" /><path d="M16 18l8-1M17 22l8-1M18 26l8-1M28 17l8-1M29 21l8-1M30 25l8-1" stroke="#c8c4d8" />
          <path d="M33 22l2-6 6-9 4 3-7 10z" fill="#f3b32c" /><path d="M41 8l2-3 4 3-2 3z" fill="#ea5a5a" />
          <path d="M60 6q4.500-6 9 0" stroke="#1f6ee0" strokeWidth="2" />
          <path d="M54 16Q55 4 64.500 4T75 16v17q0 3-4 3H58q-4 0-4-3z" fill="#1a84f0" /><path d="M54 16v17q0 3 4 3V8q-4 3-4 8z" fill="#0f62d0" />
          <path d="M57.500 14q7-3 14 0" stroke="#0f5ac4" strokeWidth="1.200" /><path d="M57 24q1-5 8-5t8 5v8q0 2-2 2H59q-2 0-2-2z" fill="#2796fb" stroke="#0d50b8" /><path d="M58.500 32q6 3 13.500-1" stroke="#b58af4" strokeWidth="1.500" />
        </Svg>
      </div>
      <Svg w={20} h={20} className="ml-[16px] mt-[11px]"><path d="M.7 0v3.500h12.600V0M.7 20v-3.500h12.600V20M.7 6.500h12.600v7H.7zM17.500 0v4M17.500 10v9" stroke="#fff" strokeWidth="1.200" /><rect x="16" y="6" width="3" height="3" fill="#fff" /></Svg>
      <Svg w={25} h={22} className="ml-[34px] mt-[11px]"><path d="M0 1h10l2 2h12v17H0z" fill="#ffd766" /><path d="M0 1h10l2 2-1 1H0z" fill="#dd9a10" /><path d="M4 21v-8q0-2 2-2h13q2 0 2 2v8h-4v-5H8v5z" fill="#3f95d8" /></Svg>
      <div className="ml-[19px] flex gap-[9px]">
        {apps.map((a, i) => <div key={i} className="flex w-[45px] shrink-0 justify-center border-b-2 border-[#76b9ed] pr-px pt-[8px]">{a}</div>)}
      </div>
      <div className="ml-auto flex items-center text-[12px] leading-none">
        <Svg w={61} h={18}>
          <path d="M0 11.500l6-6 6 6" stroke="#fff" strokeWidth="1.300" />
          <path d="M19.500 7h3l4-4v13l-4-4h-3z" stroke="#fff" strokeWidth="1.200" /><path d="M29 7q2 2.500 0 5" stroke="#fff" strokeWidth="1.200" /><path d="M31.500 5q3.500 4.500 0 9M34 3q4.500 6.500 0 13" stroke="#999" />
          <path d="M48.500 6.500h9v8h-12v-3" stroke="#fff" /><rect x="49" y="8" width="7" height="5" fill="#fff" /><path d="M58.500 9v3" stroke="#fff" /><path d="M43 5h4.500v2q-2.300 3-4.500 0zM44 3v2M46.500 3v2M45.300 8v4" stroke="#fff" fill="#fff" />
        </Svg>
        <Fit w={27} className="ml-[28px] pt-[2px]">ROU</Fit>
        <div className="ml-[14px] flex w-[61px] flex-col items-center gap-[8px] pt-px"><Fit w={48}>4:42 PM</Fit><Fit w={61}>16-Nov-23</Fit></div>
        <Svg w={17} h={17} className="ml-[20px]"><path d="M.7.700h15.300v11.500h-5l-3 3.500v-3.500H.7z" stroke="#fff" strokeWidth="1.300" /></Svg>
        <div className="ml-[21px] mr-1 h-[43px] w-px bg-[#8a8a8a]" />
      </div>
    </div>
  );
}

export default function App() {
  return (
    <div className={"flex h-[1080px] w-[1919px] flex-col overflow-hidden bg-[#f0f0f0] " + UI}>
      <TitleBar />
      <MenuBar />
      <div className="h-[2px] shrink-0 bg-[#f0f0f0]" />
      <Ribbon />
      <TabBar />
      <div className="flex h-[857px] shrink-0">
        <div className="flex w-[247px] shrink-0 flex-col">
          <PanelHeader title="Project Manager" w={87} />
          <ProjectTree />
          <HScroll />
          <div className={"h-[6px] shrink-0 " + hatch} />
          <PanelHeader title="Properties" w={53} />
          <Properties />
        </div>
        <div className={"w-[6px] shrink-0 " + hatch} />
        <div className="flex min-w-0 flex-1 flex-col">
          <PlotArea />
          <div className={"h-[6px] shrink-0 " + hatch} />
          <div className="flex min-h-0 flex-1">
            <div className="flex w-[833px] shrink-0 flex-col"><PanelHeader title="Message Manager" w={96} /><Messages /></div>
            <div className={"w-[6px] shrink-0 " + hatch} />
            <div className="flex flex-1 flex-col"><PanelHeader title="Progress" w={45} /><div className="flex-1 bg-white" /></div>
          </div>
        </div>
      </div>
      <StatusBar />
      <Taskbar />
    </div>
  );
}
